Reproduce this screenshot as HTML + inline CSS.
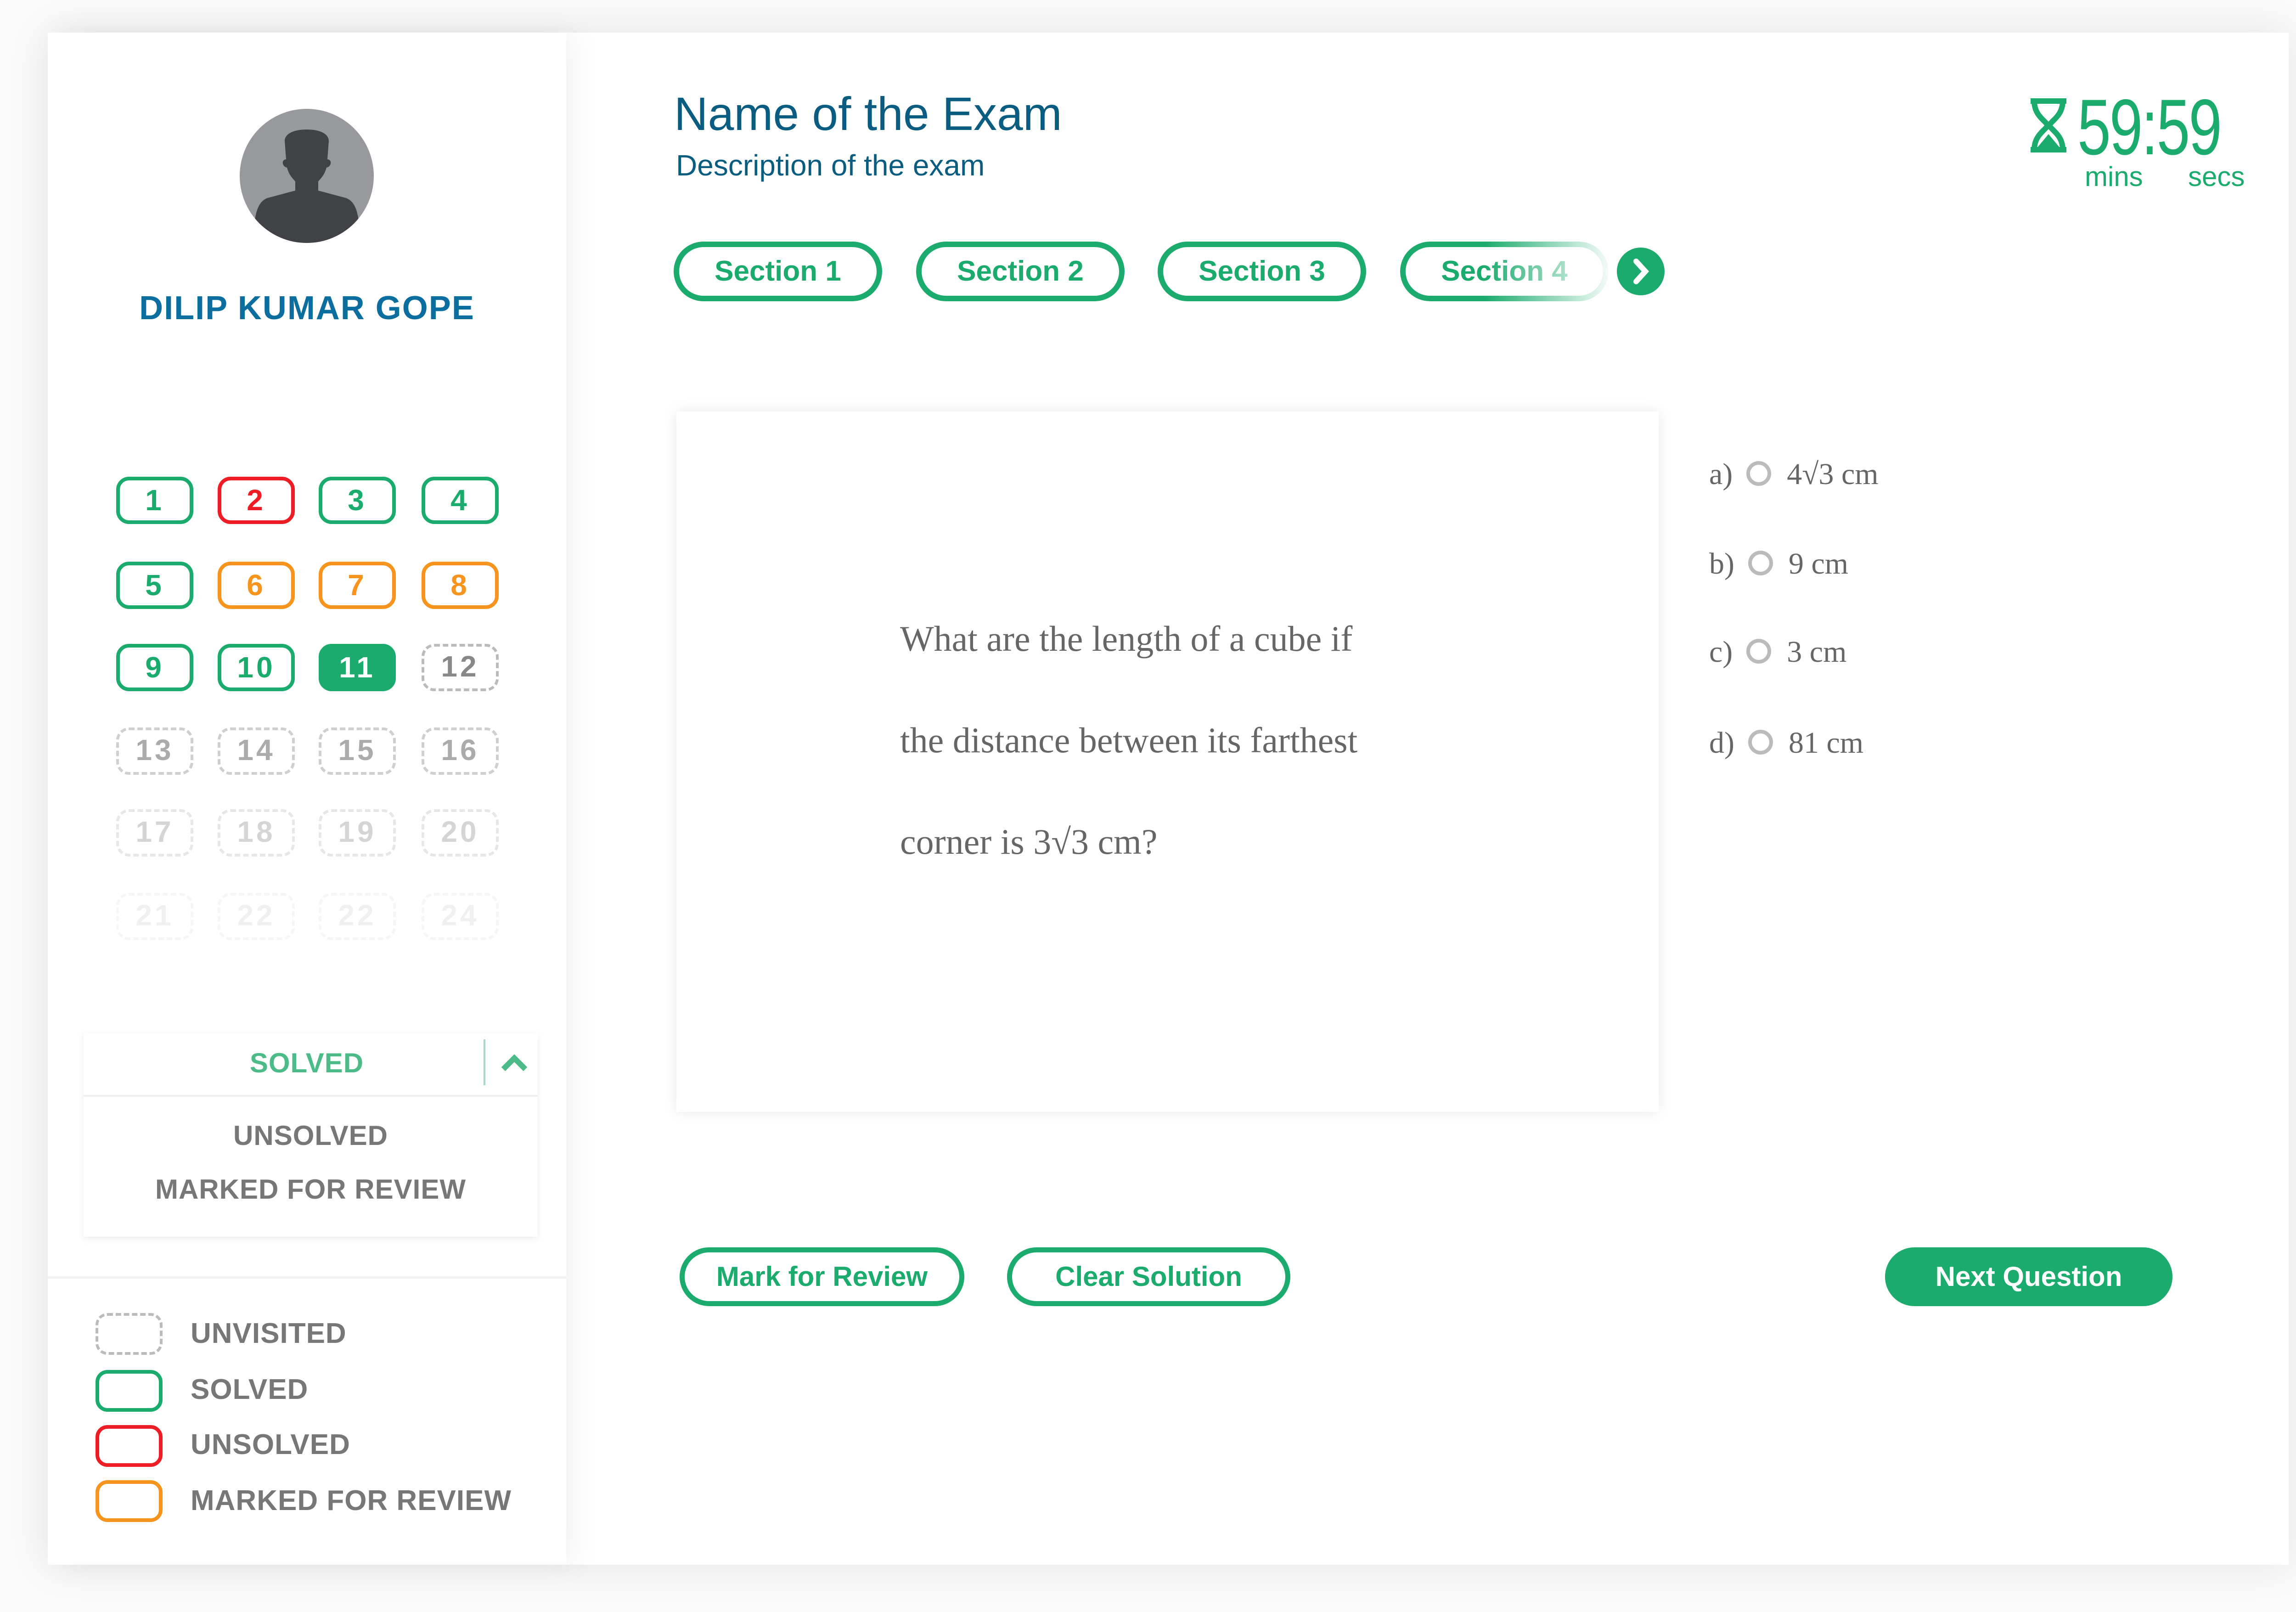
<!DOCTYPE html>
<html><head><meta charset="utf-8"><style>
*{margin:0;padding:0;box-sizing:border-box}
body{width:5088px;height:3510px;background:#fafafa;position:relative;overflow:hidden;font-family:"Liberation Sans","DejaVu Sans",sans-serif}
.card{position:absolute;left:104px;top:71px;width:4880px;height:3336px;background:#fff;box-shadow:0 0 90px rgba(0,0,0,.09)}
.side{position:absolute;left:104px;top:71px;width:1129px;height:3336px;background:#fff;box-shadow:20px 0 60px rgba(0,0,0,.05)}
.a{position:absolute}
.q{position:absolute;width:168px;height:103px;border:8px solid;border-radius:28px;text-align:center;font-size:64px;line-height:86px;font-weight:bold;letter-spacing:6px}
.g{border-color:#1aab6d;color:#1aab6d}.r{border-color:#ee1c25;color:#ee1c25}.o{border-color:#f7941d;color:#f7941d}
.d{border:6px dashed #bbb;color:#888}
.pill{position:absolute;top:526px;width:454px;height:130px;border:12px solid #1aab6d;border-radius:65px;color:#1aab6d;font-size:62px;text-align:center;line-height:106px;font-weight:bold}
.opt{position:absolute;left:3722px;font-family:"Liberation Serif",serif;font-size:66px;color:#666}
.rad{display:inline-block;width:54px;height:54px;border:8px solid #bbb;border-radius:50%;vertical-align:-4px;margin:0 34px 0 30px}
.btn{position:absolute;top:2716px;height:128px;border:11px solid #1aab6d;border-radius:64px;color:#1aab6d;font-size:60px;font-weight:bold;text-align:center;line-height:106px}
.lg{position:absolute;left:208px;width:146px;height:91px;border:8px solid;border-radius:26px}
.lt{position:absolute;left:415px;font-size:62px;color:#777;font-weight:bold;letter-spacing:1px}
</style></head><body>
<div class="card"></div>
<div class="side"></div>
<svg class="a" style="left:522px;top:237px" width="292" height="292" viewBox="0 0 292 292">
<defs><clipPath id="c"><circle cx="146" cy="146" r="146"/></clipPath></defs>
<circle cx="146" cy="146" r="146" fill="#98999d"/>
<g clip-path="url(#c)" fill="#414246">
<path d="M146 45c-30 0-48 10-48 25l3 40c-10 0-10 15 2 18 5 18 14 25 18 30v20l-60 16c-30 10-30 60-30 100h230c0-40 0-90-30-100l-60-16v-20c4-5 13-12 18-30 12-3 12-18 2-18l3-40c0-15-18-25-48-25z"/></g></svg>
<div class="a" style="left:104px;width:1129px;top:630px;text-align:center;font-size:72px;font-weight:bold;color:#0b6e9e;letter-spacing:2px">DILIP KUMAR GOPE</div>

<div class="q g" style="left:253px;top:1038px">1</div><div class="q r" style="left:474px;top:1038px">2</div><div class="q g" style="left:694px;top:1038px">3</div><div class="q g" style="left:918px;top:1038px">4</div>
<div class="q g" style="left:253px;top:1223px">5</div><div class="q o" style="left:474px;top:1223px">6</div><div class="q o" style="left:694px;top:1223px">7</div><div class="q o" style="left:918px;top:1223px">8</div>
<div class="q g" style="left:253px;top:1402px">9</div><div class="q g" style="left:474px;top:1402px">10</div><div class="q g" style="left:694px;top:1402px;background:#1aab6d;color:#fff">11</div><div class="q d" style="left:918px;top:1402px">12</div>
<div class="q d" style="left:253px;top:1584px;opacity:.7">13</div><div class="q d" style="left:474px;top:1584px;opacity:.7">14</div><div class="q d" style="left:694px;top:1584px;opacity:.7">15</div><div class="q d" style="left:918px;top:1584px;opacity:.7">16</div>
<div class="q d" style="left:253px;top:1762px;opacity:.35">17</div><div class="q d" style="left:474px;top:1762px;opacity:.35">18</div><div class="q d" style="left:694px;top:1762px;opacity:.35">19</div><div class="q d" style="left:918px;top:1762px;opacity:.35">20</div>
<div class="q d" style="left:253px;top:1944px;opacity:.12">21</div><div class="q d" style="left:474px;top:1944px;opacity:.12">22</div><div class="q d" style="left:694px;top:1944px;opacity:.12">22</div><div class="q d" style="left:918px;top:1944px;opacity:.12">24</div>

<div class="a" style="left:182px;top:2249px;width:989px;height:444px;background:#fff;box-shadow:0 4px 14px rgba(0,0,0,.08)"></div>
<div class="a" style="left:182px;top:2384px;width:989px;height:4px;background:#f0f0f0"></div>
<div class="a" style="left:182px;top:2280px;width:972px;text-align:center;font-size:60px;font-weight:bold;color:#4cbb87;letter-spacing:1px">SOLVED</div>
<div class="a" style="left:1053px;top:2263px;width:4px;height:100px;background:#a8dcc2"></div>
<svg class="a" style="left:1088px;top:2288px" width="64" height="50" viewBox="0 0 64 50"><path d="M8 40L32 16L56 40" stroke="#4cbb87" stroke-width="12" fill="none"/></svg>
<div class="a" style="left:182px;top:2438px;width:989px;text-align:center;font-size:60px;font-weight:bold;color:#777;letter-spacing:1px">UNSOLVED</div>
<div class="a" style="left:182px;top:2555px;width:989px;text-align:center;font-size:60px;font-weight:bold;color:#777;letter-spacing:1px">MARKED FOR REVIEW</div>
<div class="a" style="left:104px;top:2779px;width:1129px;height:5px;background:#f3f3f3"></div>

<div class="lg" style="top:2859px;border:6px dashed #bbb"></div><div class="lt" style="top:2868px">UNVISITED</div>
<div class="lg" style="top:2983px;border-color:#1aab6d"></div><div class="lt" style="top:2990px">SOLVED</div>
<div class="lg" style="top:3103px;border-color:#ee1c25"></div><div class="lt" style="top:3110px">UNSOLVED</div>
<div class="lg" style="top:3223px;border-color:#f7941d"></div><div class="lt" style="top:3232px">MARKED FOR REVIEW</div>

<div class="a" style="left:1468px;top:190px;font-size:102px;color:#0a5c80">Name of the Exam</div>
<div class="a" style="left:1472px;top:323px;font-size:64px;color:#0a5c80">Description of the exam</div>

<svg class="a" style="left:4418px;top:214px" width="86" height="118" viewBox="0 0 86 118"><path d="M4 6H82M4 112H82M12 6C12 40 40 50 40 59C40 68 12 78 12 112M74 6C74 40 46 50 46 59C46 68 74 78 74 112" stroke="#1aab6d" stroke-width="12" fill="none"/><path d="M18 108L43 78L68 108Z" fill="#1aab6d"/></svg>
<div class="a" style="left:4524px;top:178px;font-size:172px;color:#1aab6d;font-weight:300;letter-spacing:-4px;transform:scaleX(.76);transform-origin:left">59:59</div>
<div class="a" style="left:4540px;top:350px;font-size:60px;color:#1aab6d">mins</div>
<div class="a" style="left:4765px;top:350px;font-size:60px;color:#1aab6d">secs</div>

<div class="pill" style="left:1467px">Section 1</div>
<div class="pill" style="left:1995px">Section 2</div>
<div class="pill" style="left:2521px">Section 3</div>
<div class="pill" style="left:3049px;-webkit-mask-image:linear-gradient(90deg,#000 40%,rgba(0,0,0,.05) 100%);mask-image:linear-gradient(90deg,#000 40%,rgba(0,0,0,.05) 100%)">Section 4</div>
<svg class="a" style="left:3521px;top:539px" width="104" height="104" viewBox="0 0 104 104"><circle cx="52" cy="52" r="52" fill="#1aab6d"/><path d="M42 30L62 52L42 74" stroke="#fff" stroke-width="12" fill="none" stroke-linecap="round"/></svg>

<div class="a" style="left:1473px;top:896px;width:2139px;height:1525px;background:#fff;box-shadow:0 0 30px rgba(0,0,0,.09)"></div>
<div class="a" style="left:1960px;top:1280px;font-family:'Liberation Serif',serif;font-size:78px;color:#666;line-height:221px">What are the length of a cube if<br>the distance between its farthest<br>corner is 3√3 cm?</div>

<div class="opt" style="top:995px">a)<span class="rad"></span>4√3 cm</div>
<div class="opt" style="top:1190px">b)<span class="rad"></span>9 cm</div>
<div class="opt" style="top:1382px">c)<span class="rad"></span>3 cm</div>
<div class="opt" style="top:1580px">d)<span class="rad"></span>81 cm</div>

<div class="btn" style="left:1480px;width:620px">Mark for Review</div>
<div class="btn" style="left:2193px;width:617px">Clear Solution</div>
<div class="btn" style="left:4105px;width:626px;background:#1aab6d;color:#fff">Next Question</div>
</body></html>
